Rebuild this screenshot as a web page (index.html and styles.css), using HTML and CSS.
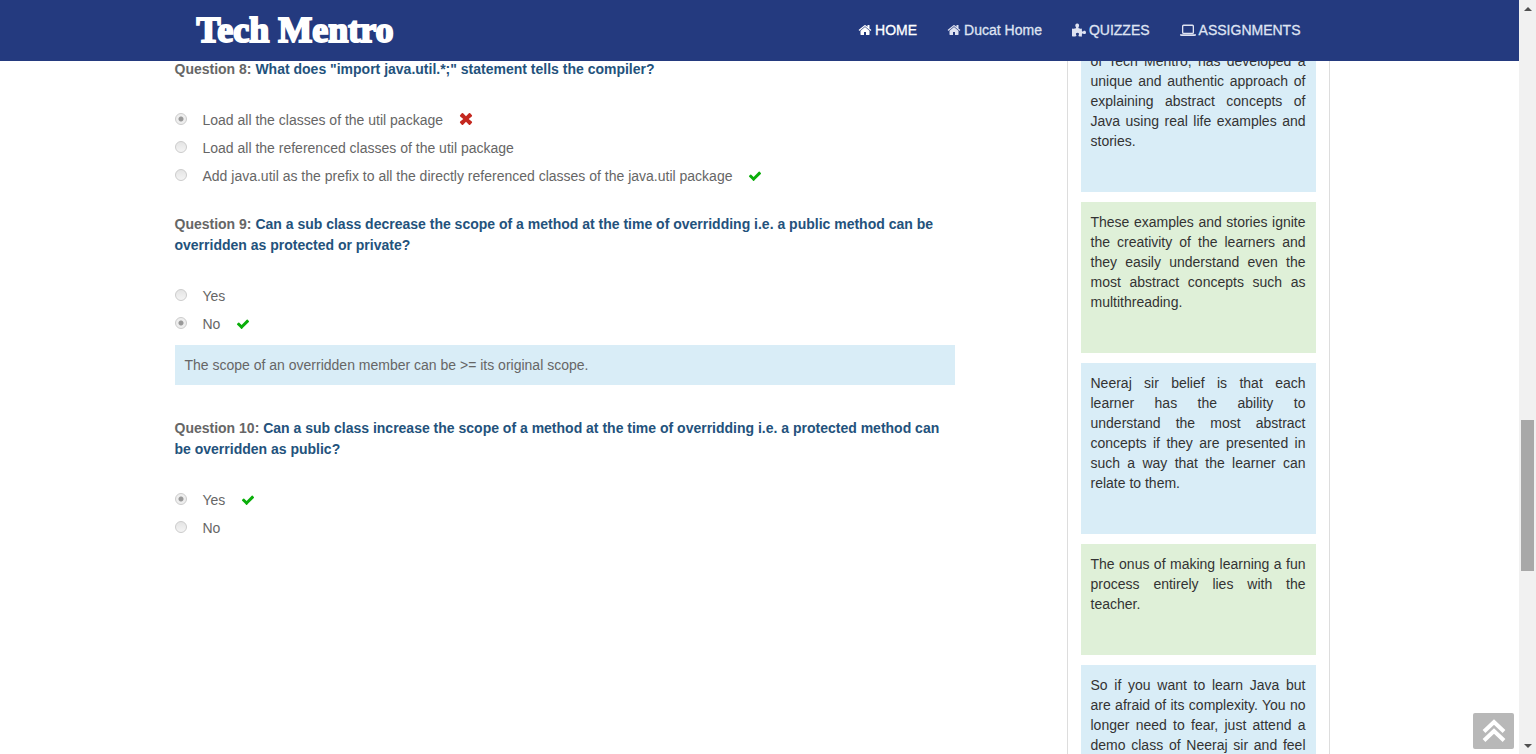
FILE: index.html
```html
<!DOCTYPE html>
<html lang="en">
<head>
<meta charset="utf-8">
<title>Tech Mentro</title>
<link rel="stylesheet" href="styles.css">
</head>
<body>
<svg class="sprite" aria-hidden="true">
  <symbol id="home" viewBox="0 0 1792 1792"><path d="M1472 992v480q0 26-19 45t-45 19h-384v-384h-256v384h-384q-26 0-45-19t-19-45v-480q0-1 .5-3t.5-3l575-474 575 474q1 2 1 6zm223-69l-62 74q-8 9-21 11h-3q-13 0-21-7l-692-577-692 577q-12 8-24 7-13-2-21-11l-62-74q-8-10-7-23.500t11-21.500l719-599q32-26 76-26t76 26l244 204v-195q0-14 9-23t23-9h192q14 0 23 9t9 23v408l219 182q10 8 11 21.500t-7 23.500z"/></symbol>
  <symbol id="puzzle" viewBox="0 0 14 14"><path d="M0 5.500Q2 6 3.800 5.300C4.400 5 4 4.400 3.600 3.700 2.800 2 3.600 .5 5.200 .5S7.600 2 6.800 3.700C6.400 4.400 6.100 5 6.800 5.300Q8.500 5.900 10 5.400Q9.600 7 10 8.200C10.300 8.800 10.800 8.600 11.300 8.200 12.500 7.300 14 8 14 9.400S12.600 11.600 11.300 10.700C10.700 10.300 10.200 10.200 10 10.900Q9.600 12 10 13.400Q8.400 13.800 6.900 13.200C6.200 12.900 6.500 12.300 6.800 11.800 7.400 10.700 6.700 9.800 5.500 9.800S3.500 10.700 4.100 11.800C4.500 12.500 4.700 13 3.900 13.300Q2 13.800 0 13.300z"/></symbol>
  <symbol id="laptop" viewBox="0 0 16 14"><path fill-rule="evenodd" d="M3.500 1.500h9A1.500 1.500 0 0 1 14 3v6.500a1.500 1.500 0 0 1-1.500 1.500h-9A1.500 1.500 0 0 1 2 9.500V3A1.500 1.500 0 0 1 3.500 1.500zm.3 1.400a.5.5 0 0 0-.5.5v5.800a.5.5 0 0 0 .5.5h8.400a.5.5 0 0 0 .5-.5V3.400a.5.5 0 0 0-.5-.5zM0 11.300h16v.9q-.3.800-1.500.800h-13Q.3 13 0 12.200z"/></symbol>
  <symbol id="check" viewBox="0 0 1792 1792"><path d="M1671 566q0 40-28 68l-724 724-136 136q-28 28-68 28t-68-28l-136-136-362-362q-28-28-28-68t28-68l136-136q28-28 68-28t68 28l294 295 656-657q28-28 68-28t68 28l136 136q28 28 28 68z"/></symbol>
  <symbol id="cross" viewBox="0 0 14 14"><path d="M1 3.300 2.800 1.200Q3.400 .6 4.100 1.200L7 4.300 9.900 1.200Q10.600 .6 11.200 1.200L13 3.300Q13.300 3.900 12.800 4.400L9.700 7 12.800 9.600Q13.300 10.100 13 10.700L11.200 12.800Q10.600 13.400 9.900 12.800L7 9.700 4.100 12.800Q3.400 13.400 2.800 12.800L1 10.700Q.7 10.100 1.200 9.600L4.300 7 1.200 4.400Q.7 3.900 1 3.300z"/></symbol>
</svg>

<div class="page">
  <header class="topbar">
    <div class="container topbar-inner">
      <a class="logo" href="#">Tech Mentro</a>
      <nav class="nav">
        <a class="active" href="#"><svg class="icon"><use href="#home"/></svg>HOME</a>
        <a href="#"><svg class="icon"><use href="#home"/></svg>Ducat Home</a>
        <a href="#"><svg class="icon"><use href="#puzzle"/></svg>QUIZZES</a>
        <a href="#"><svg class="icon wide"><use href="#laptop"/></svg>ASSIGNMENTS</a>
      </nav>
    </div>
  </header>

  <div class="container columns">
    <main class="quiz">
      <section class="question">
        <h2><span class="number">Question 8:</span> What does "import java.util.*;" statement tells the compiler?</h2>
        <div class="options">
          <label><input type="radio" name="q8" checked><span>Load all the classes of the util package</span><svg class="mark wrong"><use href="#cross"/></svg></label>
          <label><input type="radio" name="q8"><span>Load all the referenced classes of the util package</span></label>
          <label><input type="radio" name="q8"><span>Add java.util as the prefix to all the directly referenced classes of the java.util package</span><svg class="mark right"><use href="#check"/></svg></label>
        </div>
      </section>
      <section class="question">
        <h2><span class="number">Question 9:</span> Can a sub class decrease the scope of a method at the time of overridding i.e. a public method can be overridden as protected or private?</h2>
        <div class="options">
          <label><input type="radio" name="q9"><span>Yes</span></label>
          <label><input type="radio" name="q9" checked><span>No</span><svg class="mark right"><use href="#check"/></svg></label>
        </div>
        <p class="note">The scope of an overridden member can be &gt;= its original scope.</p>
      </section>
      <section class="question">
        <h2><span class="number">Question 10:</span> Can a sub class increase the scope of a method at the time of overridding i.e. a protected method can be overridden as public?</h2>
        <div class="options">
          <label><input type="radio" name="q10" checked><span>Yes</span><svg class="mark right"><use href="#check"/></svg></label>
          <label><input type="radio" name="q10"><span>No</span></label>
        </div>
      </section>
    </main>

    <aside class="sidebar">
      <p class="card blue">of Tech Mentro, has developed a unique and authentic approach of explaining abstract concepts of Java using real life examples and stories.</p>
      <p class="card green">These examples and stories ignite the creativity of the learners and they easily understand even the most abstract concepts such as multithreading.</p>
      <p class="card blue">Neeraj sir belief is that each learner has the ability to understand the most abstract concepts if they are presented in such a way that the learner can relate to them.</p>
      <p class="card green">The onus of making learning a fun process entirely lies with the teacher.</p>
      <p class="card blue continued">So if you want to learn Java but are afraid of its complexity. You no longer need to fear, just attend a demo class of Neeraj sir and feel</p>
    </aside>
  </div>

  <button class="to-top" type="button" aria-label="Back to top">
    <svg viewBox="0 0 24 24"><path d="M2 12.500 12 3l10 9.500M2 21.500 12 12l10 9.500"/></svg>
  </button>
</div>

<div class="scrollbar" aria-hidden="true">
  <span class="arrow up"></span>
  <div class="track"><div class="thumb"></div></div>
  <span class="arrow down"></span>
</div>
</body>
</html>
```
FILE: styles.css
```css
* { box-sizing: border-box; }

body {
  display: flex;
  height: 100vh;
  margin: 0;
  overflow: hidden;
  background: #fff;
  color: #666;
  font: 14px/20px "Liberation Sans", Arial, sans-serif;
}

h2, p { margin: 0; }
a { color: inherit; text-decoration: none; }
.sprite { position: absolute; width: 0; height: 0; }

.page {
  position: relative;
  flex: 1;
  min-width: 0;
  overflow: hidden;
}

.container {
  max-width: 1170px;
  margin: 0 auto;
}

.topbar {
  position: absolute;
  inset: 0 0 auto;
  z-index: 2;
  background: #243a7f;
}

.topbar-inner {
  display: flex;
  align-items: center;
  justify-content: space-between;
  height: 61px;
  padding: 0 44px 2px 22px;
}

.logo {
  color: #fff;
  font: bold 36px/58px "Liberation Serif", serif;
  -webkit-text-stroke: 2px #fff;
}

.nav {
  display: flex;
  gap: 30px;
  color: #dfe3f2;
}

.nav a {
  display: flex;
  align-items: center;
  gap: 3px;
  -webkit-text-stroke: 0.3px currentColor;
}

.nav .active { color: #fff; }
.icon { width: 14px; height: 14px; fill: currentColor; }
.icon.wide { width: 16px; }

.columns {
  display: flex;
  justify-content: space-between;
}

.quiz {
  width: 780px;
  padding-top: 59px;
}

.question { margin-bottom: 24px; }
.question:has(.note) { margin-bottom: 33px; }

.question h2 {
  margin-bottom: 26px;
  color: #23527c;
  font-size: 14px;
  line-height: 21px;
}

.number { color: #666; }

.options label {
  display: flex;
  align-items: center;
  height: 28px;
}

.options input {
  appearance: none;
  width: 12px;
  height: 12px;
  margin: 0 16px 3px 0;
  border: 1px solid #ccc;
  border-radius: 50%;
  background: linear-gradient(#e4e4e4, #f4f4f4);
}

.options input:checked {
  background: radial-gradient(circle, #999 0 2px, #eee 3px);
}

.mark { width: 14px; height: 14px; margin-left: 16px; }
.right { fill: #0aae0a; }
.wrong { margin-bottom: 2px; fill: #c4281f; }

.note {
  margin-top: 7px;
  padding: 10px;
  background: #d9edf7;
}

.sidebar {
  display: flex;
  flex-direction: column;
  gap: 10px;
  width: 263px;
  margin-right: 15px;
  padding: 41px 13px 0;
  border: solid #ddd;
  border-width: 0 1px;
  color: #333;
  text-align: justify;
}

.card { padding: 10px 10px 41px; }
.continued { text-align-last: justify; }
.blue { background: #d9edf7; }
.green { background: #dff0d8; }

.to-top {
  position: absolute;
  right: 5px;
  bottom: 5px;
  z-index: 3;
  display: grid;
  place-items: center;
  width: 41px;
  height: 36px;
  padding: 0;
  border: 0;
  border-radius: 2px;
  background: #b8b8b8;
}

.to-top svg {
  width: 24px;
  height: 24px;
  fill: none;
  stroke: #fff;
  stroke-width: 4;
}

.scrollbar {
  display: flex;
  flex-direction: column;
  align-items: center;
  width: 17px;
  background: #f1f1f1;
}

.arrow {
  display: grid;
  place-items: center;
  height: 17px;
}

.arrow::before {
  content: "";
  border: 4px solid transparent;
}

.up::before { border-top: 0; border-bottom-color: #505050; }
.down::before { border-bottom: 0; border-top-color: #505050; }

.track {
  display: flex;
  flex: 1;
  flex-direction: column;
  width: 13px;
}

.track::before { content: ""; flex: 403; }
.track::after { content: ""; flex: 166; }
.thumb { flex: 151; background: #a8a8a8; }
```
